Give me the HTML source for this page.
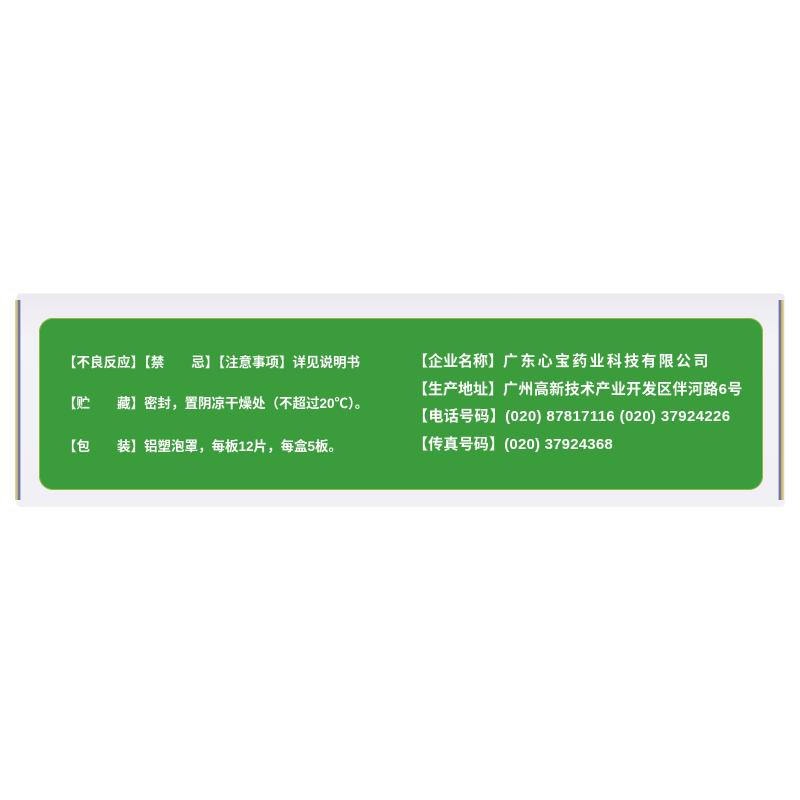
<!DOCTYPE html>
<html><head><meta charset="utf-8"><style>
body{margin:0;width:800px;height:800px;background:#fff;position:relative;overflow:hidden;font-family:"Liberation Sans","Noto Sans CJK SC",sans-serif}
.box{position:absolute;left:17px;top:294px;width:767px;height:212px;background:linear-gradient(#eceaf0,#f3f2f6 20%,#f1f0f5);border-radius:3px;box-shadow:0 0 1px #bbb}
.le{position:absolute;left:15px;top:300px;width:6px;height:200px;background:linear-gradient(90deg,#e6d8a8,#c9b36a 40%,#4a5ea8 70%,#e8e6ee);}
.re{position:absolute;left:778px;top:300px;width:6px;height:200px;background:linear-gradient(90deg,#e8e6ee,#4a5ea8 30%,#c9b36a 60%,#e6d8a8);}
.g{position:absolute;left:39px;top:318px;width:724px;height:172px;background:#3b9c3b;border-radius:14px;box-shadow:inset 0 0 0 1px #8fb840}
.t{position:absolute;color:#fff;font-size:13.5px;white-space:pre;line-height:16px;font-weight:bold}
.r{font-size:15px;line-height:18px}
</style></head><body>
<div class="box"></div><div class="le"></div><div class="re"></div>
<div class="g"></div>
<div class="t" style="left:63px;top:355px">【不良反应】【禁　　忌】【注意事项】详见说明书</div>
<div class="t" style="left:63px;top:396px">【贮　　藏】密封，置阴凉干燥处（不超过20℃）。</div>
<div class="t" style="left:63px;top:439px">【包　　装】铝塑泡罩，每板12片，每盒5板。</div>
<div class="t r" style="left:413px;top:353px">【企业名称】<span style="letter-spacing:2.3px">广东心宝药业科技有限公司</span></div>
<div class="t r" style="left:413px;top:381px">【生产地址】<span style="letter-spacing:0.4px">广州高新技术产业开发区伴河路6号</span></div>
<div class="t r" style="left:413px;top:408px;letter-spacing:0.35px">【电话号码】(020) 87817116 (020) 37924226</div>
<div class="t r" style="left:413px;top:436px;letter-spacing:0.2px">【传真号码】(020) 37924368</div>
</body></html>
